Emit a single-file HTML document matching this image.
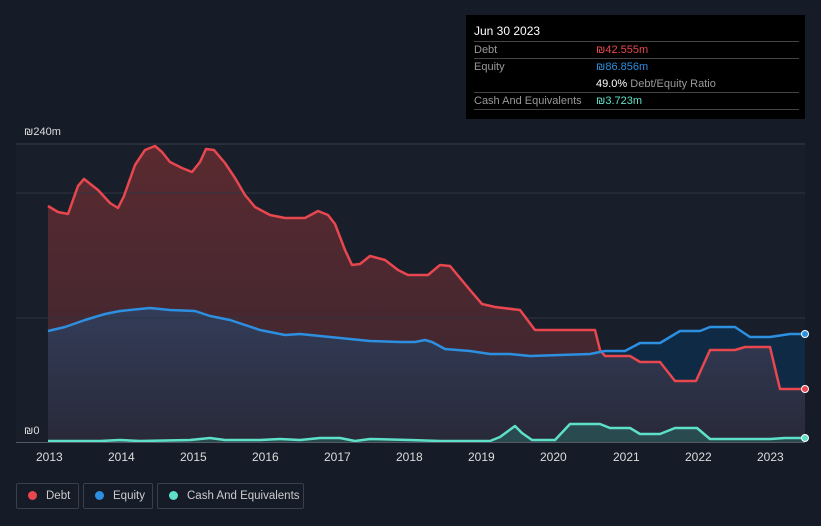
<!DOCTYPE html><html><head><style>
body{margin:0;width:821px;height:526px;background:#151b27;font-family:"Liberation Sans",sans-serif;overflow:hidden;position:relative}
.tt{position:absolute;left:466px;top:15px;width:339px;height:104px;background:#000;color:#fff;font-size:11px}
.tt .r{position:absolute;left:8px;right:6px;border-top:1px solid #444;height:17px;line-height:17px;color:#999}
.tt span{position:absolute;left:122px}
.lg{position:absolute;top:483px;height:26px;border:1px solid #3a404b;border-radius:2px;color:#ccc;font-size:11.5px;line-height:24px;box-sizing:border-box;white-space:nowrap;overflow:hidden}
.lg i{display:inline-block;width:9px;height:9px;border-radius:50%;margin:0 9px 0 11px;vertical-align:-1px}
.ax{position:absolute;top:450px;color:#ddd;font-size:12px}
</style></head><body>
<svg width="821" height="526" style="position:absolute;left:0;top:0">
<defs>
<linearGradient id="dg" x1="0" y1="0" x2="0" y2="1"><stop offset="0" stop-color="#5a2a30"/><stop offset="1" stop-color="#3a2630"/></linearGradient>
<linearGradient id="eg" x1="0" y1="0" x2="0" y2="1"><stop offset="0" stop-color="#2f4060"/><stop offset="1" stop-color="#252a3a"/></linearGradient>
</defs>
<rect x="16" y="143" width="789" height="299" fill="#181e2a"/>
<path d="M48,206 L58,212 L68,214 L78,186 L84,179 L98,190 L110,203 L118,208 L124,196 L135,165 L145,150 L155,146 L162,152 L170,162 L182,168 L192,172 L200,162 L206,149 L214,150 L225,163 L235,178 L245,195 L255,207 L270,215 L285,218 L305,218 L318,211 L328,215 L335,224 L345,250 L352,265 L360,264 L370,256 L385,260 L398,270 L408,275 L428,275 L440,265 L450,266 L460,278 L470,290 L482,304 L495,307 L520,310 L535,330 L580,330 L595,330 L600,350 L605,356 L630,356 L640,362 L660,362 L675,381 L696,381 L710,350 L735,350 L745,347 L770,347 L780,389 L805,389 L805,442 L48,442Z" fill="url(#dg)"/>
<path d="M48,331 L65,327 L85,320 L105,314 L120,311 L150,308 L170,310 L195,311 L210,316 L230,320 L260,330 L285,335 L300,334 L320,336 L340,338 L370,341 L400,342 L415,342 L425,340 L432,342 L445,349 L470,351 L490,354 L510,354 L530,356 L560,355 L590,354 L605,351 L625,351 L640,343 L660,343 L680,331 L700,331 L710,327 L735,327 L750,337 L770,337 L790,334 L805,334 L805,442 L48,442Z" fill="url(#eg)" opacity="0.85"/>
<path d="M600,350 L605,351 L625,351 L640,343 L660,343 L680,331 L700,331 L710,327 L735,327 L750,337 L770,337 L790,334 L805,334 L805,389 L780,389 L770,347 L745,347 L735,350 L710,350 L696,381 L675,381 L660,362 L640,362 L630,356 L605,356Z" fill="#0f2a45"/>
<line x1="16" y1="144" x2="805" y2="144" stroke="#3a404a"/><line x1="16" y1="193" x2="805" y2="193" stroke="#2e3440"/><line x1="16" y1="318" x2="805" y2="318" stroke="#2e3440"/>
<path d="M48,441 L100,441 L120,440 L140,441 L190,440 L210,438 L225,440 L260,440 L280,439 L300,440 L320,438 L340,438 L355,441 L370,439 L410,440 L440,441 L490,441 L500,437 L515,426 L522,433 L532,440 L555,440 L570,424 L600,424 L610,428 L630,428 L640,434 L660,434 L675,428 L697,428 L710,439 L770,439 L785,438 L805,438 L805,442 L48,442Z" fill="#2a5a58" opacity="0.7"/>
<polyline fill="none" stroke="#e8474f" stroke-width="2.5" stroke-linejoin="round" points="48,206 58,212 68,214 78,186 84,179 98,190 110,203 118,208 124,196 135,165 145,150 155,146 162,152 170,162 182,168 192,172 200,162 206,149 214,150 225,163 235,178 245,195 255,207 270,215 285,218 305,218 318,211 328,215 335,224 345,250 352,265 360,264 370,256 385,260 398,270 408,275 428,275 440,265 450,266 460,278 470,290 482,304 495,307 520,310 535,330 580,330 595,330 600,350 605,356 630,356 640,362 660,362 675,381 696,381 710,350 735,350 745,347 770,347 780,389 805,389"/>
<polyline fill="none" stroke="#2d8fe0" stroke-width="2.5" stroke-linejoin="round" points="48,331 65,327 85,320 105,314 120,311 150,308 170,310 195,311 210,316 230,320 260,330 285,335 300,334 320,336 340,338 370,341 400,342 415,342 425,340 432,342 445,349 470,351 490,354 510,354 530,356 560,355 590,354 605,351 625,351 640,343 660,343 680,331 700,331 710,327 735,327 750,337 770,337 790,334 805,334"/>
<polyline fill="none" stroke="#5ee0c8" stroke-width="2.5" stroke-linejoin="round" points="48,441 100,441 120,440 140,441 190,440 210,438 225,440 260,440 280,439 300,440 320,438 340,438 355,441 370,439 410,440 440,441 490,441 500,437 515,426 522,433 532,440 555,440 570,424 600,424 610,428 630,428 640,434 660,434 675,428 697,428 710,439 770,439 785,438 805,438"/>
<line x1="16" y1="442.5" x2="805" y2="442.5" stroke="#555b66"/>
<circle cx="805" cy="389" r="3.5" fill="#e8474f" stroke="#fff" stroke-width="1"/>
<circle cx="805" cy="334" r="3.5" fill="#2d8fe0" stroke="#fff" stroke-width="1"/>
<circle cx="805" cy="438" r="3.5" fill="#5ee0c8" stroke="#fff" stroke-width="1"/>
</svg>
<div style="position:absolute;left:24px;top:126px;color:#ddd;font-size:11px">₪240m</div>
<div style="position:absolute;left:24px;top:425px;color:#ddd;font-size:11px">₪0</div>
<div class="ax" style="left:36px">2013</div><div class="ax" style="left:108px">2014</div><div class="ax" style="left:180px">2015</div><div class="ax" style="left:252px">2016</div><div class="ax" style="left:324px">2017</div><div class="ax" style="left:396px">2018</div><div class="ax" style="left:468px">2019</div><div class="ax" style="left:540px">2020</div><div class="ax" style="left:613px">2021</div><div class="ax" style="left:685px">2022</div><div class="ax" style="left:757px">2023</div>
<div class="tt">
<div style="position:absolute;left:8px;top:9px;font-size:12px">Jun 30 2023</div>
<div class="r" style="top:26px">Debt<span style="color:#e8474f">₪42.555m</span></div>
<div class="r" style="top:43px">Equity<span style="color:#2d8fe0">₪86.856m</span></div>
<div style="position:absolute;left:130px;top:61px;color:#999;line-height:17px"><b style="color:#fff;font-weight:normal">49.0%</b> Debt/Equity Ratio</div>
<div class="r" style="top:77px">Cash And Equivalents<span style="color:#5ee0c8">₪3.723m</span></div>
<div class="r" style="top:94px;height:0"></div>
</div>
<div class="lg" style="left:16px;width:63px"><i style="background:#e8474f"></i>Debt</div>
<div class="lg" style="left:83px;width:70px"><i style="background:#2d8fe0"></i>Equity</div>
<div class="lg" style="left:157px;width:147px"><i style="background:#5ee0c8"></i>Cash And Equivalents</div>
</body></html>
